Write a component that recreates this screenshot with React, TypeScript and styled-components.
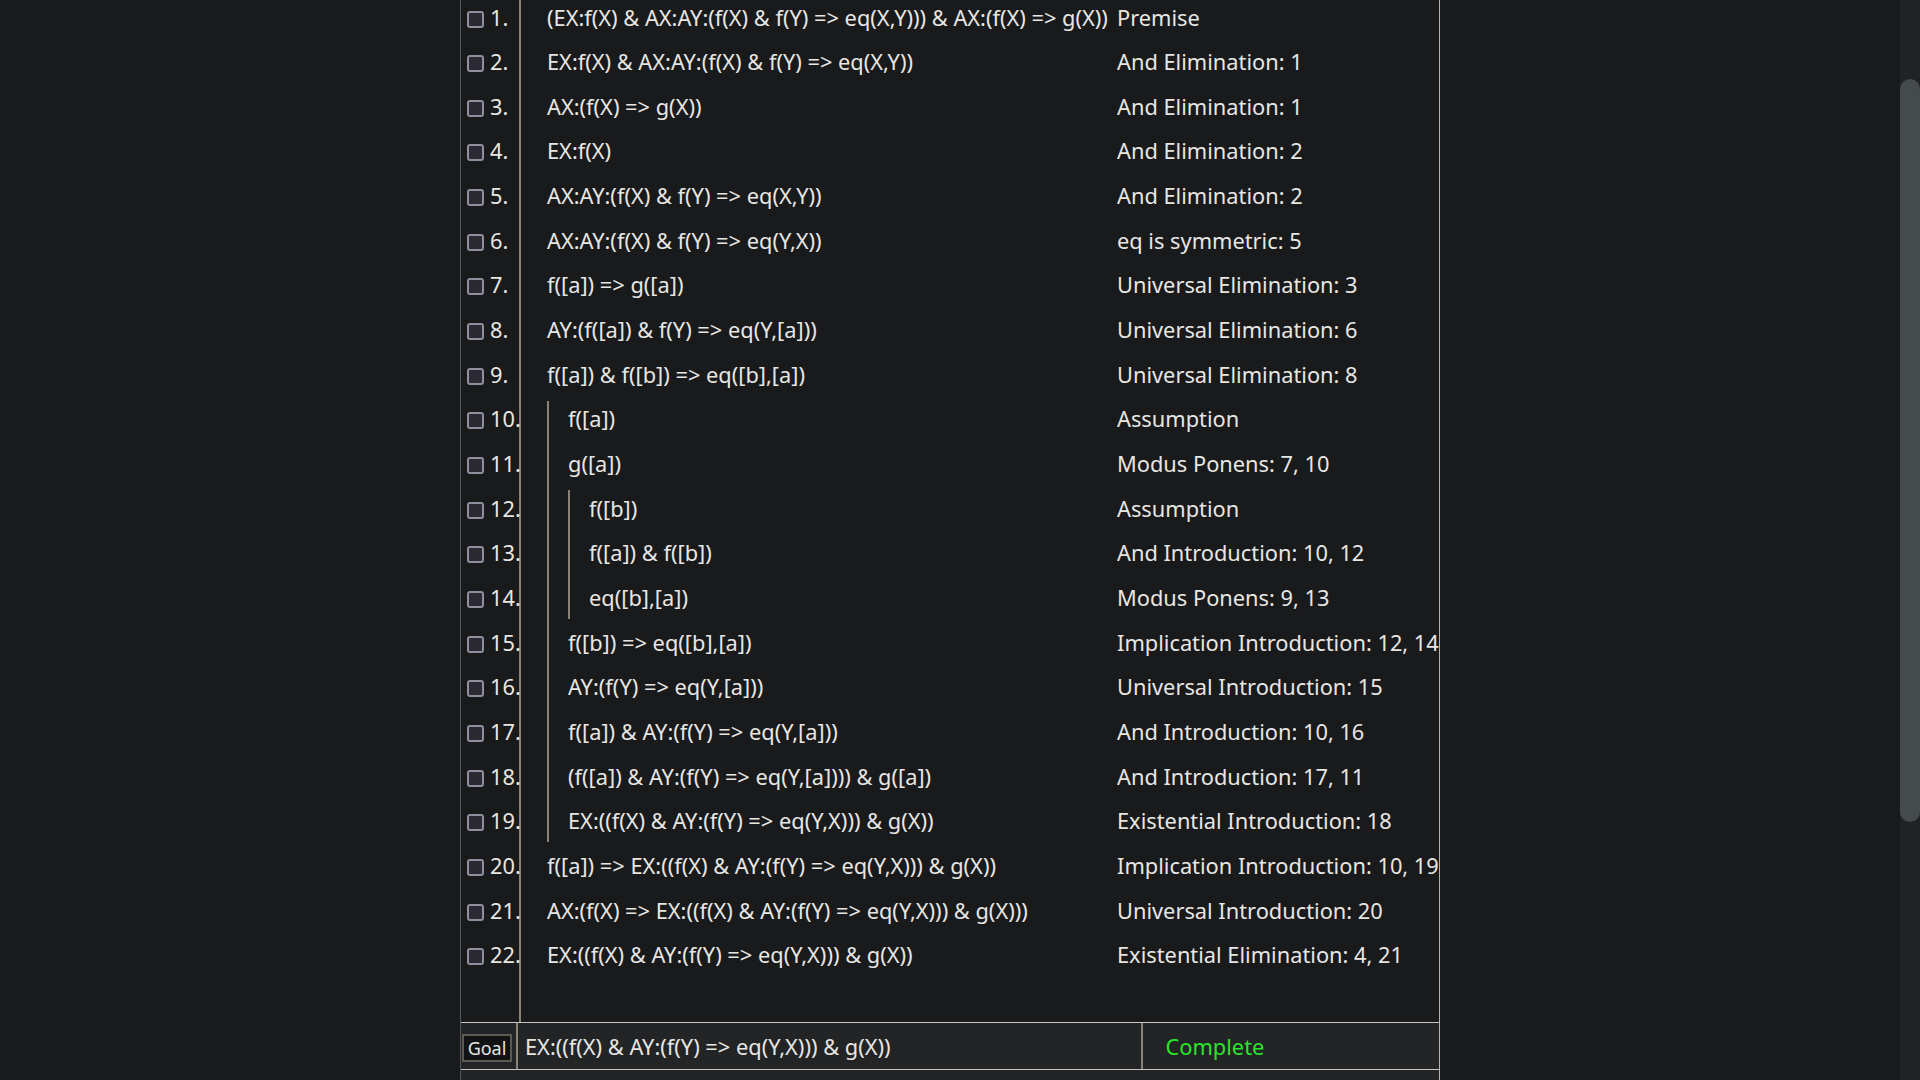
import React from "react";
import styled, { createGlobalStyle } from "styled-components";

const GlobalStyle = createGlobalStyle`
  html, body {
    margin: 0;
    padding: 0;
    background: #181a1b;
    color: #e8e6e3;
    font-family: "Noto Sans", "Open Sans", sans-serif;
    overflow: hidden;
  }
`;

const Page = styled.div`
  display: flex;
  height: 100vh;
  width: 100vw;
`;

const Main = styled.main`
  flex: 1;
  display: flex;
  justify-content: center;
  overflow: hidden;
`;

const ScrollTrack = styled.div`
  width: 20px;
  background: #202324;
  display: flex;
  flex-direction: column;
`;

const ScrollThumb = styled.div`
  margin-top: 79px;
  height: 743px;
  border-radius: 10px;
  background: #454a4d;
`;

const Panel = styled.section`
  box-sizing: border-box;
  width: 980px;
  height: 100%;
  border-left: 1px solid #55585b;
  border-right: 1px solid #b5b2ad;
  display: flex;
  flex-direction: column;
  font-size: 21.8px;
`;

const ProofArea = styled.div`
  flex: 1;
  display: flex;
  flex-direction: column;
  overflow: hidden;
`;

const ProofList = styled.div`
  margin-top: -3.33px;
  display: flex;
  flex-direction: column;
`;

const Row = styled.div`
  display: flex;
  height: 44.67px;
  align-items: stretch;
  white-space: nowrap;
`;

const LineCell = styled.div`
  box-sizing: border-box;
  width: 60px;
  flex: none;
  border-right: 2px solid #8a8275;
  display: flex;
  align-items: center;
  padding-left: 6px;
  gap: 6px;
`;

const Check = styled.input.attrs({ type: "checkbox" })`
  appearance: none;
  -webkit-appearance: none;
  box-sizing: border-box;
  margin: 0;
  width: 17px;
  height: 17px;
  flex: none;
  border: 2px solid #8f8f9d;
  border-radius: 3px;
  background: #2b2a33;
`;

const Text = styled.span`
  position: relative;
  top: -2px;
`;

const FormulaCell = styled.div`
  box-sizing: border-box;
  width: 596px;
  flex: none;
  display: flex;
  align-items: center;
  padding-left: 26px;
  overflow: hidden;
`;

const Bar = styled.span<{ $start?: boolean; $end?: boolean }>`
  align-self: stretch;
  width: 2px;
  flex: none;
  margin-right: 19px;
  margin-top: ${(p) => (p.$start ? "2px" : "0")};
  margin-bottom: ${(p) => (p.$end ? "3px" : "0")};
  background: #8a8275;
`;

const JustCell = styled.div`
  flex: 1;
  min-width: 0;
  display: flex;
  align-items: center;
  overflow: hidden;
`;

const Filler = styled.div`
  flex: 1;
  display: flex;
`;

const FillerLine = styled.div`
  box-sizing: border-box;
  width: 60px;
  border-right: 2px solid #8a8275;
`;

const GoalBar = styled.div`
  box-sizing: border-box;
  height: 48px;
  flex: none;
  display: flex;
  background: #222426;
  border-top: 1px solid #c8c5c0;
  border-bottom: 1px solid #c8c5c0;
  white-space: nowrap;
`;

const GoalLabelCell = styled.div`
  box-sizing: border-box;
  width: 57px;
  flex: none;
  border-right: 2px solid #8a8275;
  display: flex;
  align-items: flex-start;
  padding: 11px 0 0 1px;
`;

const GoalLabel = styled.span`
  box-sizing: border-box;
  width: 50px;
  height: 28px;
  border: 2px solid #5e5950;
  background: #121314;
  font-size: 18px;
  display: flex;
  align-items: center;
  justify-content: center;
`;

const GoalFormula = styled.div`
  box-sizing: border-box;
  width: 625px;
  flex: none;
  border-right: 2px solid #8a8275;
  display: flex;
  align-items: center;
  padding-left: 7px;
`;

const Status = styled.div<{ $ok: boolean }>`
  flex: 1;
  display: flex;
  align-items: center;
  padding-left: 22.5px;
  color: ${(p) => (p.$ok ? "#2ae52a" : "#ff5050")};
`;

const Footer = styled.div`
  flex: none;
  height: 10px;
  background: #222426;
`;

type Seg = "s" | "m" | "e";
type Line = { f: string; j: string; bars?: Seg[] };

const lines: Line[] = [
  { f: "(EX:f(X) & AX:AY:(f(X) & f(Y) => eq(X,Y))) & AX:(f(X) => g(X))", j: "Premise" },
  { f: "EX:f(X) & AX:AY:(f(X) & f(Y) => eq(X,Y))", j: "And Elimination: 1" },
  { f: "AX:(f(X) => g(X))", j: "And Elimination: 1" },
  { f: "EX:f(X)", j: "And Elimination: 2" },
  { f: "AX:AY:(f(X) & f(Y) => eq(X,Y))", j: "And Elimination: 2" },
  { f: "AX:AY:(f(X) & f(Y) => eq(Y,X))", j: "eq is symmetric: 5" },
  { f: "f([a]) => g([a])", j: "Universal Elimination: 3" },
  { f: "AY:(f([a]) & f(Y) => eq(Y,[a]))", j: "Universal Elimination: 6" },
  { f: "f([a]) & f([b]) => eq([b],[a])", j: "Universal Elimination: 8" },
  { f: "f([a])", j: "Assumption", bars: ["s"] },
  { f: "g([a])", j: "Modus Ponens: 7, 10", bars: ["m"] },
  { f: "f([b])", j: "Assumption", bars: ["m", "s"] },
  { f: "f([a]) & f([b])", j: "And Introduction: 10, 12", bars: ["m", "m"] },
  { f: "eq([b],[a])", j: "Modus Ponens: 9, 13", bars: ["m", "e"] },
  { f: "f([b]) => eq([b],[a])", j: "Implication Introduction: 12, 14", bars: ["m"] },
  { f: "AY:(f(Y) => eq(Y,[a]))", j: "Universal Introduction: 15", bars: ["m"] },
  { f: "f([a]) & AY:(f(Y) => eq(Y,[a]))", j: "And Introduction: 10, 16", bars: ["m"] },
  { f: "(f([a]) & AY:(f(Y) => eq(Y,[a]))) & g([a])", j: "And Introduction: 17, 11", bars: ["m"] },
  { f: "EX:((f(X) & AY:(f(Y) => eq(Y,X))) & g(X))", j: "Existential Introduction: 18", bars: ["e"] },
  { f: "f([a]) => EX:((f(X) & AY:(f(Y) => eq(Y,X))) & g(X))", j: "Implication Introduction: 10, 19" },
  { f: "AX:(f(X) => EX:((f(X) & AY:(f(Y) => eq(Y,X))) & g(X)))", j: "Universal Introduction: 20" },
  { f: "EX:((f(X) & AY:(f(Y) => eq(Y,X))) & g(X))", j: "Existential Elimination: 4, 21" },
];

export default function App() {
  return (
    <>
      <GlobalStyle />
      <Page>
        <Main>
          <Panel>
            <ProofArea>
              <ProofList>
                {lines.map((l, i) => (
                  <Row key={i}>
                    <LineCell>
                      <Check readOnly />
                      <Text>{i + 1}.</Text>
                    </LineCell>
                    <FormulaCell>
                      {(l.bars ?? []).map((b, k) => (
                        <Bar key={k} $start={b === "s"} $end={b === "e"} />
                      ))}
                      <Text>{l.f}</Text>
                    </FormulaCell>
                    <JustCell>
                      <Text>{l.j}</Text>
                    </JustCell>
                  </Row>
                ))}
              </ProofList>
              <Filler>
                <FillerLine />
              </Filler>
            </ProofArea>
            <GoalBar>
              <GoalLabelCell>
                <GoalLabel>Goal</GoalLabel>
              </GoalLabelCell>
              <GoalFormula>EX:((f(X) &amp; AY:(f(Y) =&gt; eq(Y,X))) &amp; g(X))</GoalFormula>
              <Status $ok>Complete</Status>
            </GoalBar>
            <Footer />
          </Panel>
        </Main>
        <ScrollTrack>
          <ScrollThumb />
        </ScrollTrack>
      </Page>
    </>
  );
}
